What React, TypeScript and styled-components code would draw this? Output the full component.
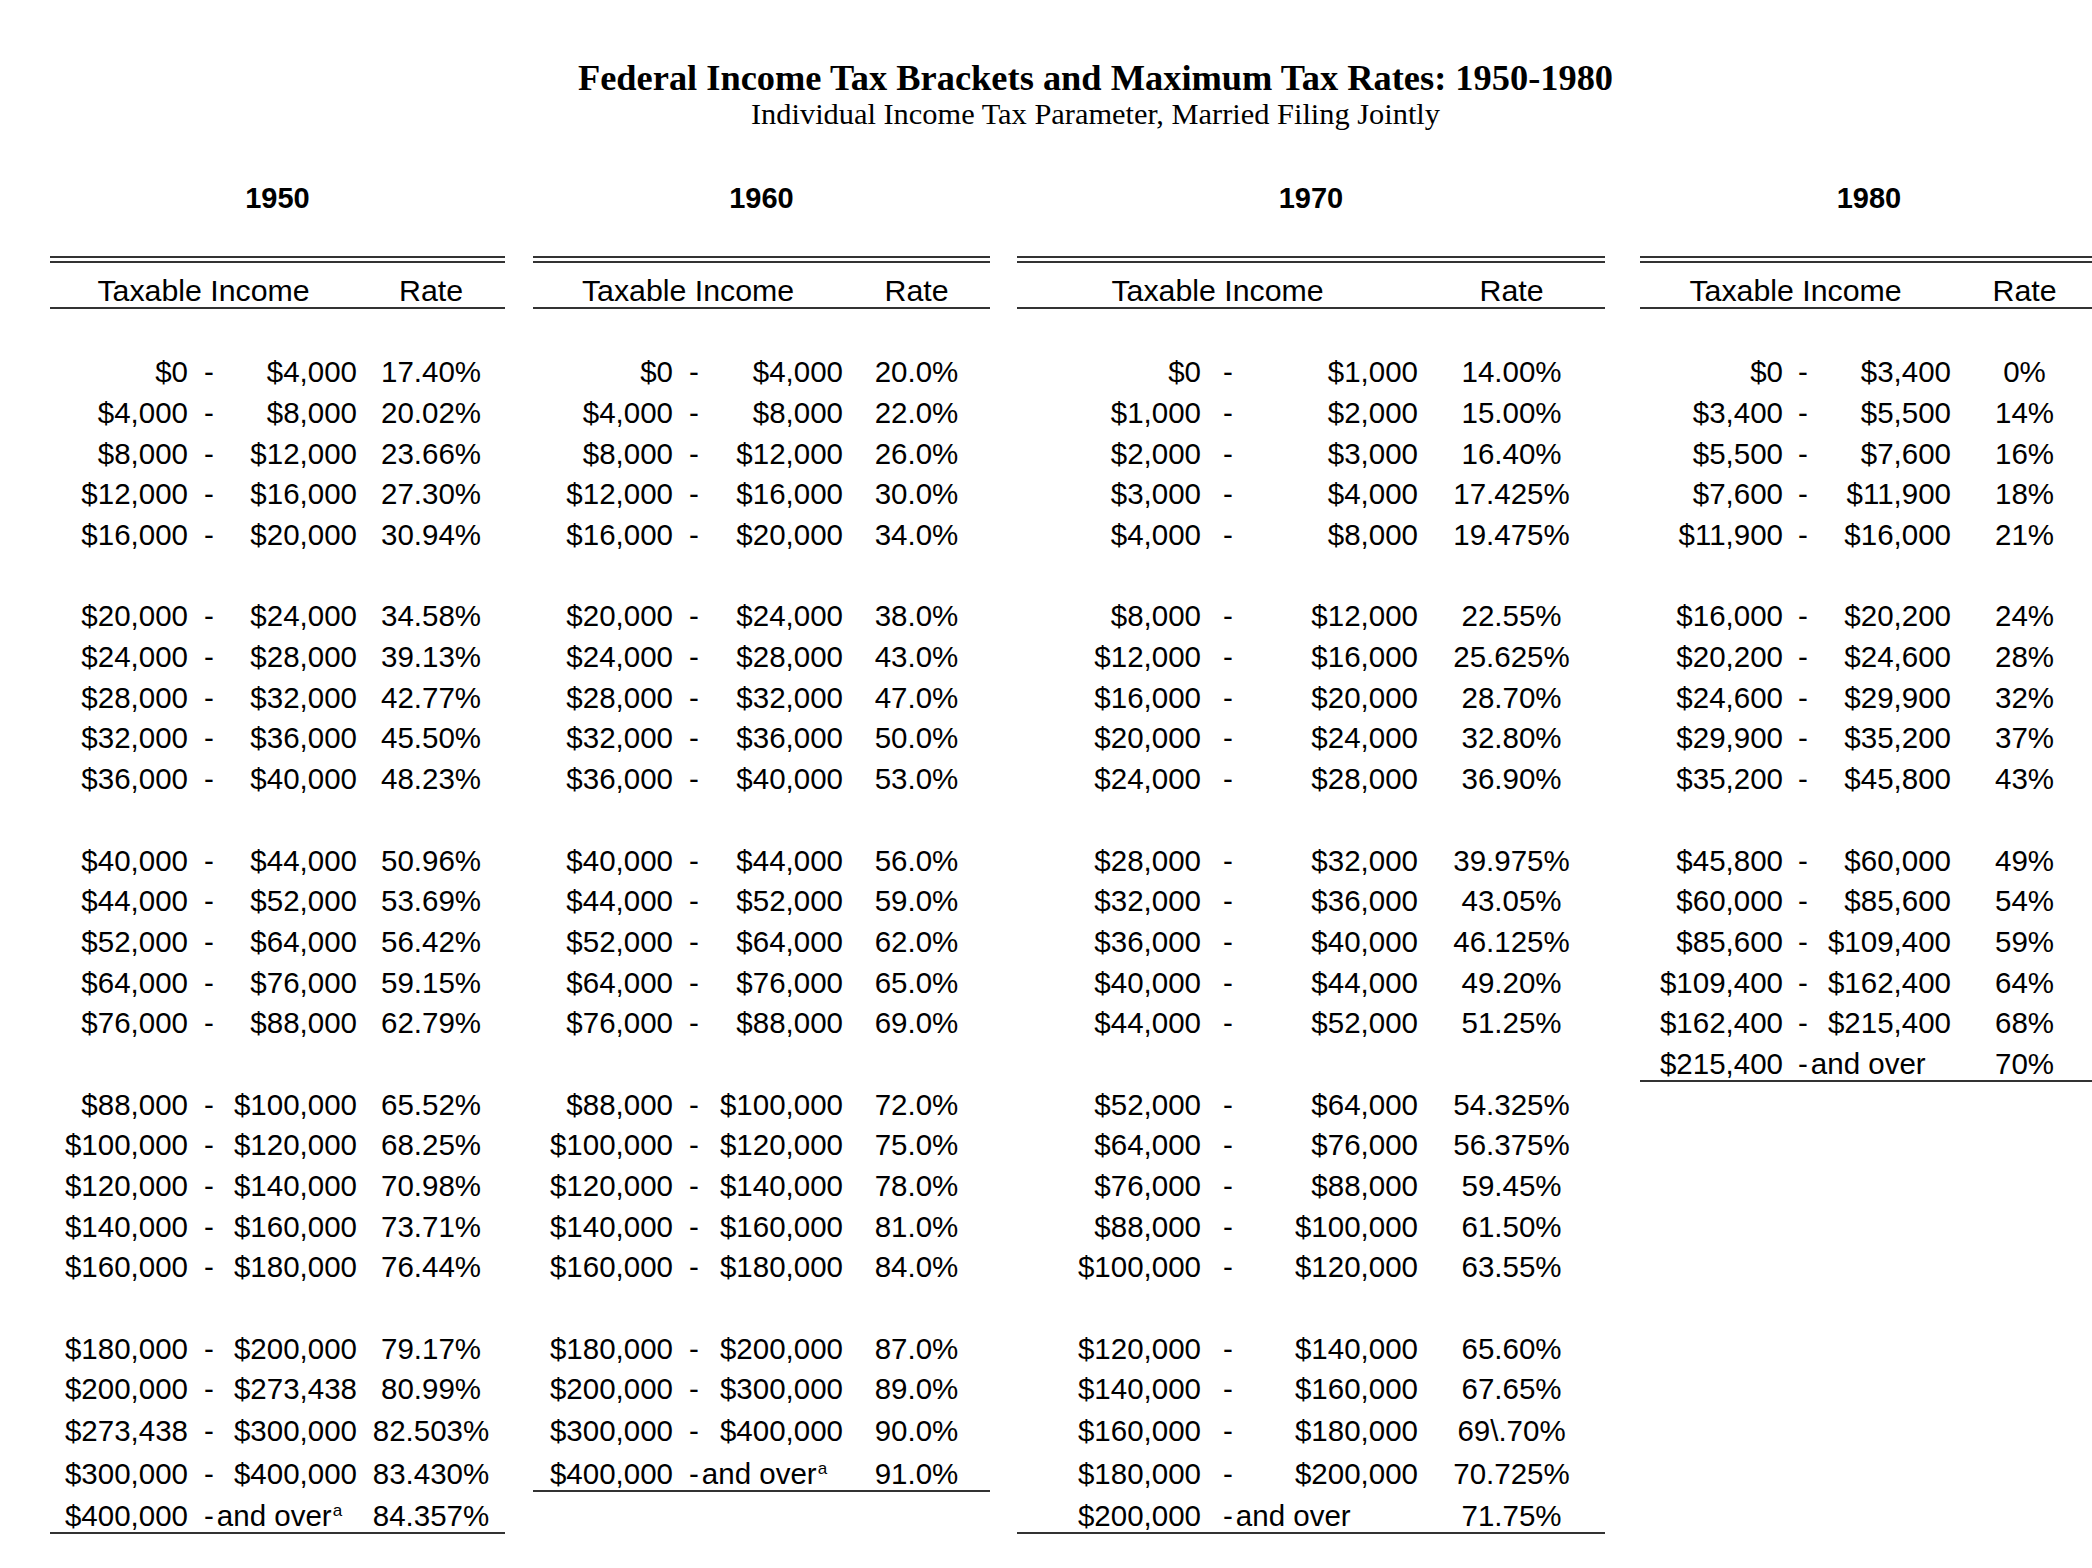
import React from 'react';
import styled, { createGlobalStyle } from 'styled-components';

type Bracket = { from: string; to?: string; rate: string; note?: boolean };
type Layout = { width: number; offset: number; from: number; income: number; dash: number };
type YearTable = { year: string; layout: Layout; groups: Bracket[][] };

const GlobalStyle = createGlobalStyle`
  html, body {
    margin: 0;
    padding: 0;
    overflow: hidden;
    background: #ffffff;
  }
  body {
    font-family: 'Liberation Sans', Arial, sans-serif;
    color: #000000;
  }
`;

const Page = styled.div`
  padding-top: 59px;
`;

const Heading = styled.header`
  padding-left: 99px;
  text-align: center;
  font-family: 'Liberation Serif', 'Times New Roman', serif;
`;

const Title = styled.h1`
  margin: 0;
  font-size: 36.4px;
  line-height: 38px;
  font-weight: bold;
`;

const Subtitle = styled.div`
  font-size: 30.4px;
  line-height: 34px;
`;

const Sheet = styled.div`
  display: flex;
  align-items: flex-start;
  margin-top: 50.8px;
  padding-left: 50px;
`;

const Table = styled.section<{ $w: number; $offset: number }>`
  display: flex;
  flex-direction: column;
  flex-shrink: 0;
  width: ${(p) => p.$w}px;
  margin-left: ${(p) => p.$offset}px;
`;

const YearLabel = styled.div`
  font-size: 29px;
  line-height: 32px;
  font-weight: bold;
  text-align: center;
`;

const DoubleRule = styled.div`
  margin-top: 42.2px;
  height: 3px;
  border-top: 2px solid #333;
  border-bottom: 2px solid #333;
`;

const HeadRow = styled.div<{ $income: number }>`
  display: grid;
  grid-template-columns: ${(p) => p.$income}px 1fr;
  padding-top: 11.6px;
  font-size: 30.3px;
  line-height: 32px;
  text-align: center;
  border-bottom: 2px solid #333;
`;

const Body = styled.div`
  display: flex;
  flex-direction: column;
  margin-top: 39px;
  border-bottom: 2px solid #333;
`;

const Row = styled.div<{ $h: number; $from: number; $income: number }>`
  display: grid;
  grid-template-columns: ${(p) => p.$from}px ${(p) => p.$income - p.$from}px 1fr;
  align-items: end;
  height: ${(p) => p.$h}px;
  font-size: 29.5px;
  line-height: 32px;
  white-space: nowrap;
`;

const From = styled.span`
  text-align: right;
`;

const Mid = styled.span<{ $dash: number }>`
  display: flex;
  padding-left: ${(p) => p.$dash}px;
`;

const To = styled.span`
  margin-left: auto;
`;

const Over = styled.span`
  margin-left: 3px;
`;

const Note = styled.sup`
  font-size: 17px;
  line-height: 0;
  vertical-align: 10px;
  margin-left: 1px;
`;

const Rate = styled.span`
  text-align: center;
`;

const b = (from: string, to: string, rate: string): Bracket => ({ from, to, rate });
const over = (from: string, rate: string, note = false): Bracket => ({ from, rate, note });

const tables: YearTable[] = [
  {
    year: '1950',
    layout: { width: 455, offset: 0, from: 138, income: 307, dash: 16 },
    groups: [
      [
        b('$0', '$4,000', '17.40%'),
        b('$4,000', '$8,000', '20.02%'),
        b('$8,000', '$12,000', '23.66%'),
        b('$12,000', '$16,000', '27.30%'),
        b('$16,000', '$20,000', '30.94%'),
      ],
      [
        b('$20,000', '$24,000', '34.58%'),
        b('$24,000', '$28,000', '39.13%'),
        b('$28,000', '$32,000', '42.77%'),
        b('$32,000', '$36,000', '45.50%'),
        b('$36,000', '$40,000', '48.23%'),
      ],
      [
        b('$40,000', '$44,000', '50.96%'),
        b('$44,000', '$52,000', '53.69%'),
        b('$52,000', '$64,000', '56.42%'),
        b('$64,000', '$76,000', '59.15%'),
        b('$76,000', '$88,000', '62.79%'),
      ],
      [
        b('$88,000', '$100,000', '65.52%'),
        b('$100,000', '$120,000', '68.25%'),
        b('$120,000', '$140,000', '70.98%'),
        b('$140,000', '$160,000', '73.71%'),
        b('$160,000', '$180,000', '76.44%'),
      ],
      [
        b('$180,000', '$200,000', '79.17%'),
        b('$200,000', '$273,438', '80.99%'),
        b('$273,438', '$300,000', '82.503%'),
        b('$300,000', '$400,000', '83.430%'),
        over('$400,000', '84.357%', true),
      ],
    ],
  },
  {
    year: '1960',
    layout: { width: 457, offset: 28, from: 140, income: 310, dash: 16 },
    groups: [
      [
        b('$0', '$4,000', '20.0%'),
        b('$4,000', '$8,000', '22.0%'),
        b('$8,000', '$12,000', '26.0%'),
        b('$12,000', '$16,000', '30.0%'),
        b('$16,000', '$20,000', '34.0%'),
      ],
      [
        b('$20,000', '$24,000', '38.0%'),
        b('$24,000', '$28,000', '43.0%'),
        b('$28,000', '$32,000', '47.0%'),
        b('$32,000', '$36,000', '50.0%'),
        b('$36,000', '$40,000', '53.0%'),
      ],
      [
        b('$40,000', '$44,000', '56.0%'),
        b('$44,000', '$52,000', '59.0%'),
        b('$52,000', '$64,000', '62.0%'),
        b('$64,000', '$76,000', '65.0%'),
        b('$76,000', '$88,000', '69.0%'),
      ],
      [
        b('$88,000', '$100,000', '72.0%'),
        b('$100,000', '$120,000', '75.0%'),
        b('$120,000', '$140,000', '78.0%'),
        b('$140,000', '$160,000', '81.0%'),
        b('$160,000', '$180,000', '84.0%'),
      ],
      [
        b('$180,000', '$200,000', '87.0%'),
        b('$200,000', '$300,000', '89.0%'),
        b('$300,000', '$400,000', '90.0%'),
        over('$400,000', '91.0%', true),
      ],
    ],
  },
  {
    year: '1970',
    layout: { width: 588, offset: 27, from: 184, income: 401, dash: 22 },
    groups: [
      [
        b('$0', '$1,000', '14.00%'),
        b('$1,000', '$2,000', '15.00%'),
        b('$2,000', '$3,000', '16.40%'),
        b('$3,000', '$4,000', '17.425%'),
        b('$4,000', '$8,000', '19.475%'),
      ],
      [
        b('$8,000', '$12,000', '22.55%'),
        b('$12,000', '$16,000', '25.625%'),
        b('$16,000', '$20,000', '28.70%'),
        b('$20,000', '$24,000', '32.80%'),
        b('$24,000', '$28,000', '36.90%'),
      ],
      [
        b('$28,000', '$32,000', '39.975%'),
        b('$32,000', '$36,000', '43.05%'),
        b('$36,000', '$40,000', '46.125%'),
        b('$40,000', '$44,000', '49.20%'),
        b('$44,000', '$52,000', '51.25%'),
      ],
      [
        b('$52,000', '$64,000', '54.325%'),
        b('$64,000', '$76,000', '56.375%'),
        b('$76,000', '$88,000', '59.45%'),
        b('$88,000', '$100,000', '61.50%'),
        b('$100,000', '$120,000', '63.55%'),
      ],
      [
        b('$120,000', '$140,000', '65.60%'),
        b('$140,000', '$160,000', '67.65%'),
        b('$160,000', '$180,000', '69\\.70%'),
        b('$180,000', '$200,000', '70.725%'),
        over('$200,000', '71.75%'),
      ],
    ],
  },
  {
    year: '1980',
    layout: { width: 458, offset: 35, from: 143, income: 311, dash: 15 },
    groups: [
      [
        b('$0', '$3,400', '0%'),
        b('$3,400', '$5,500', '14%'),
        b('$5,500', '$7,600', '16%'),
        b('$7,600', '$11,900', '18%'),
        b('$11,900', '$16,000', '21%'),
      ],
      [
        b('$16,000', '$20,200', '24%'),
        b('$20,200', '$24,600', '28%'),
        b('$24,600', '$29,900', '32%'),
        b('$29,900', '$35,200', '37%'),
        b('$35,200', '$45,800', '43%'),
      ],
      [
        b('$45,800', '$60,000', '49%'),
        b('$60,000', '$85,600', '54%'),
        b('$85,600', '$109,400', '59%'),
        b('$109,400', '$162,400', '64%'),
        b('$162,400', '$215,400', '68%'),
        over('$215,400', '70%'),
      ],
    ],
  },
];

// the sheet rows are shared across all four tables; the last block sits a bit looser
const ROW = 40.7;
const LAST_BLOCK = [41.4, 40, 42, 43, 42];
const rowHeight = (slot: number) => (slot >= 24 ? LAST_BLOCK[slot - 24] : ROW);

type Slot = { bracket?: Bracket };

// groups of brackets separated by one blank row, like the spreadsheet
const toSlots = (groups: Bracket[][]): Slot[] => {
  const slots: Slot[] = [];
  groups.forEach((group, gi) => {
    group.forEach((bracket) => slots.push({ bracket }));
    if (gi < groups.length - 1) slots.push({});
  });
  return slots;
};

const BracketTable: React.FC<{ table: YearTable }> = ({ table }) => {
  const { layout } = table;
  const slots = toSlots(table.groups);

  return (
    <Table $w={layout.width} $offset={layout.offset}>
      <YearLabel>{table.year}</YearLabel>
      <DoubleRule />
      <HeadRow $income={layout.income}>
        <span>Taxable Income</span>
        <span>Rate</span>
      </HeadRow>
      <Body>
        {slots.map((slot, i) => {
          const br = slot.bracket;
          return (
            <Row key={i} $h={rowHeight(i)} $from={layout.from} $income={layout.income}>
              {br && (
                <>
                  <From>{br.from}</From>
                  <Mid $dash={layout.dash}>
                    <span>-</span>
                    {br.to ? (
                      <To>{br.to}</To>
                    ) : (
                      <Over>
                        and over{br.note && <Note>a</Note>}
                      </Over>
                    )}
                  </Mid>
                  <Rate>{br.rate}</Rate>
                </>
              )}
            </Row>
          );
        })}
      </Body>
    </Table>
  );
};

const App: React.FC = () => {
  return (
    <Page>
      <GlobalStyle />
      <Heading>
        <Title>Federal Income Tax Brackets and Maximum Tax Rates: 1950-1980</Title>
        <Subtitle>Individual Income Tax Parameter, Married Filing Jointly</Subtitle>
      </Heading>
      <Sheet>
        {tables.map((t) => (
          <BracketTable key={t.year} table={t} />
        ))}
      </Sheet>
    </Page>
  );
};

export default App;
